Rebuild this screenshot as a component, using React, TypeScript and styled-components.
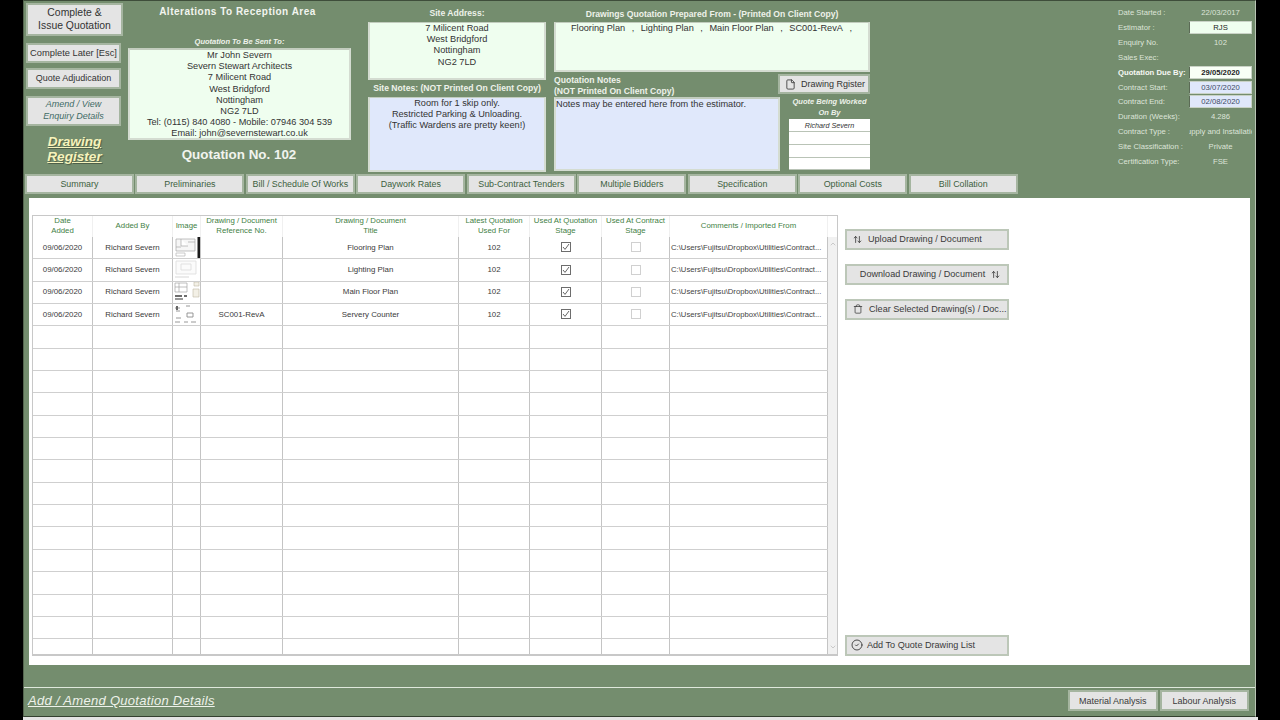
import React from 'react';
import styled, { createGlobalStyle } from 'styled-components';
import { ArrowUpDown, CircleCheck, File, Trash, ChevronUp, ChevronDown } from 'lucide-react';

const GREEN = '#748d6e';
const FACE = '#e4e4e4';
const EDGE = '#a5b5a0';
const MINT = '#effeef';
const BLUE = '#e0e8fb';

const GlobalStyle = createGlobalStyle`
  html, body {
    margin: 0;
    padding: 0;
    background: #000;
    overflow: hidden;
  }
  body {
    font-family: 'Liberation Sans', Arial, sans-serif;
  }
`;

const Page = styled.div`
  width: 1280px;
  height: 720px;
  display: flex;
  flex-direction: column;
  align-items: center;
  background: #000;
`;

const Screen = styled.div`
  width: 1233px;
  margin-left: -1px;
  height: 717px;
  flex: none;
  background: ${GREEN};
  border-top: 1px solid #3e4d3a;
  border-left: 1px solid #55654f;
  border-right: 1px solid #b8c4b4;
  border-bottom: 1px solid #33402f;
  box-sizing: border-box;
  display: flex;
  flex-direction: column;
`;

const BottomStrip = styled.div`
  width: 1235px;
  flex: 1;
  background: #e4e4e4;
`;

const Header = styled.div`
  height: 172px;
  flex: none;
  display: flex;
  padding: 2px 3px 0 2px;
  box-sizing: border-box;
`;

const ActionColumn = styled.div`
  width: 97px;
  flex: none;
  display: flex;
  flex-direction: column;
  align-items: flex-start;
`;

const ActionButton = styled.button<{ $w: number; $h: number; $top?: number; $size?: number; $note?: boolean }>`
  width: ${({ $w }) => $w}px;
  height: ${({ $h }) => $h}px;
  flex: none;
  margin: ${({ $top }) => $top || 0}px 0 0;
  padding: 0;
  background: ${FACE};
  border: 2px solid ${EDGE};
  color: ${({ $note }) => ($note ? '#3f6b66' : '#333')};
  font-family: inherit;
  font-size: ${({ $size }) => $size || 9.3}px;
  font-style: ${({ $note }) => ($note ? 'italic' : 'normal')};
  line-height: ${({ $note }) => ($note ? 1.3 : 1.17)};
  text-align: center;
  white-space: pre-line;
`;

const RegisterLink = styled.a`
  width: 100%;
  margin-top: 8px;
  color: #f6f3bb;
  font-size: 13.6px;
  line-height: 15px;
  font-weight: bold;
  font-style: italic;
  text-decoration: underline;
  text-align: center;
  white-space: pre-line;
  text-shadow: 1px 1px 1px #4d5f49;
`;

const RecipientColumn = styled.div`
  width: 223px;
  margin-left: 5px;
  flex: none;
  display: flex;
  flex-direction: column;
  align-items: center;
`;

const JobTitle = styled.div`
  width: 100%;
  margin-top: 3px;
  height: 12px;
  padding-right: 4px;
  box-sizing: border-box;
  text-align: center;
  color: #f2f5ef;
  font-size: 10px;
  line-height: 12px;
  font-weight: bold;
  letter-spacing: 0.5px;
`;

const MiniHeading = styled.div<{ $top?: number; $bottom?: number; $box?: boolean }>`
  margin: ${({ $top }) => $top || 0}px 0 ${({ $bottom }) => $bottom || 0}px;
  width: ${({ $box }) => ($box ? '81px' : 'auto')};
  color: #eef2ea;
  font-size: 7.5px;
  line-height: ${({ $box }) => ($box ? '10.5px' : '9px')};
  font-weight: bold;
  font-style: italic;
  text-align: center;
  white-space: pre-line;
`;

const TextBox = styled.div<{ $tone: 'mint' | 'blue' | 'white'; $h: number; $left?: boolean; $top?: number; $thin?: boolean }>`
  width: 100%;
  height: ${({ $h }) => $h}px;
  margin-top: ${({ $top }) => $top || 0}px;
  flex: none;
  box-sizing: border-box;
  border: 2px solid #d4dcd1;
  border-top: ${({ $thin }) => ($thin ? 1 : 2)}px solid #c2ccbe;
  background: ${({ $tone }) => ($tone === 'mint' ? MINT : $tone === 'blue' ? BLUE : '#fff')};
  color: #333;
  font-size: 9.2px;
  line-height: 11.2px;
  text-align: ${({ $left }) => ($left ? 'left' : 'center')};
  white-space: pre-line;
  overflow: hidden;
`;

const QuoteNumber = styled.div`
  margin-top: 7px;
  padding-right: 1px;
  color: #f1f4ee;
  font-size: 13.4px;
  line-height: 15px;
  font-weight: bold;
`;

const SiteColumn = styled.div`
  width: 178px;
  margin-left: 17px;
  flex: none;
  display: flex;
  flex-direction: column;
`;

const SectionLabel = styled.div<{ $top?: number; $bottom?: number; $center?: boolean }>`
  margin: ${({ $top }) => $top || 0}px 0 ${({ $bottom }) => $bottom || 0}px;
  color: #eef2ea;
  font-size: 8.6px;
  line-height: 11px;
  font-weight: bold;
  text-align: ${({ $center }) => ($center ? 'center' : 'left')};
  white-space: pre-line;
`;

const DrawingsColumn = styled.div`
  width: 316px;
  margin-left: 8px;
  flex: none;
  display: flex;
  flex-direction: column;
`;

const DrawingsList = styled.div`
  display: flex;
  padding-left: 15px;
  gap: 6.5px;
`;

const NotesRow = styled.div`
  display: flex;
  margin-top: 3px;
`;

const NotesLeft = styled.div`
  width: 226px;
  flex: none;
  display: flex;
  flex-direction: column;
`;

const NotesRight = styled.div`
  flex: 1;
  min-width: 0;
  display: flex;
  flex-direction: column;
  align-items: flex-end;
`;

const RegisterButton = styled.button`
  width: 92px;
  height: 20px;
  flex: none;
  margin: -1px 0 0;
  padding: 0 0 0 5px;
  display: flex;
  align-items: center;
  gap: 5px;
  box-sizing: border-box;
  background: ${FACE};
  border: 2px solid ${EDGE};
  color: #333;
  font-family: inherit;
  font-size: 9px;
  white-space: nowrap;
`;

const WorkerBox = styled.div`
  width: 81px;
  margin-top: 1px;
  background: #fff;
`;

const WorkerCell = styled.div`
  height: 12.85px;
  border-bottom: 1px solid #b9c3b6;
  box-sizing: border-box;
  color: #333;
  font-size: 7.2px;
  font-style: italic;
  line-height: 13px;
  text-align: center;
`;

const Details = styled.div`
  width: 134px;
  margin-left: auto;
  padding-top: 2.5px;
  display: flex;
  flex-direction: column;
`;

const DetailRow = styled.div`
  height: 14.85px;
  display: flex;
  align-items: center;
  font-size: 7.7px;
`;

const DetailLabel = styled.div<{ $strong?: boolean }>`
  width: 71px;
  flex: none;
  color: ${({ $strong }) => ($strong ? '#f6f8f3' : '#dde4d9')};
  font-weight: ${({ $strong }) => ($strong ? 'bold' : 'normal')};
  white-space: nowrap;
`;

const DetailValue = styled.div<{ $field?: 'mint' | 'blue' | 'white' }>`
  width: 63px;
  height: 13px;
  flex: none;
  box-sizing: border-box;
  overflow: hidden;
  white-space: nowrap;
  display: flex;
  justify-content: center;
  align-items: center;
  line-height: 11px;
  color: ${({ $field }) => ($field ? ($field === 'blue' ? '#3c4a66' : '#222') : '#dde4d9')};
  font-weight: ${({ $field }) => ($field === 'white' ? 'bold' : 'normal')};
  background: ${({ $field }) =>
    $field === 'mint' ? MINT : $field === 'blue' ? BLUE : $field === 'white' ? '#f8fff6' : 'transparent'};
  border: ${({ $field }) => ($field ? `1px solid #c9d2c6` : 'none')};
  border-left-color: #5b6b56;
`;

const Tabs = styled.div`
  display: grid;
  grid-template-columns: repeat(9, 108.8px);
  column-gap: 1.7px;
  height: 20px;
  flex: none;
  padding-left: 1px;
  margin-top: 1px;
`;

const Tab = styled.button`
  margin: 0;
  padding: 0;
  background: ${FACE};
  border: 2px solid ${EDGE};
  color: #3c5f40;
  font-family: inherit;
  font-size: 8.9px;
  white-space: nowrap;
`;

const Panel = styled.div`
  height: 467px;
  flex: none;
  margin: 4px 5px 0 5px;
  padding: 17px 0 9px 3px;
  box-sizing: border-box;
  background: #fff;
  display: flex;
`;

const TableFrame = styled.div`
  width: 806px;
  height: 441px;
  flex: none;
  display: flex;
  box-sizing: border-box;
  border: 1px solid #c8c8c8;
  border-bottom-width: 2px;
`;

const TableBody = styled.div`
  width: 795px;
  flex: none;
  overflow: hidden;
`;

const COLUMNS = '60px 80px 28px 82px 176px 71px 72px 68px 158px';

const HeadRow = styled.div`
  height: 21px;
  display: grid;
  grid-template-columns: ${COLUMNS};
`;

const HeadCell = styled.div`
  display: flex;
  align-items: center;
  justify-content: center;
  padding-bottom: 1px;
  box-sizing: border-box;
  border-right: 1px solid #f0f0f0;
  color: #3f7f45;
  font-size: 7.8px;
  line-height: 9.6px;
  text-align: center;
  white-space: pre-line;
`;

const BodyRow = styled.div`
  height: 22.35px;
  box-sizing: border-box;
  display: grid;
  grid-template-columns: ${COLUMNS};
  border-bottom: 1px solid #cfcfcf;
`;

const BodyCell = styled.div<{ $start?: boolean }>`
  display: flex;
  align-items: center;
  justify-content: ${({ $start }) => ($start ? 'flex-start' : 'center')};
  padding: 0 0 1px ${({ $start }) => ($start ? '1px' : '0')};
  box-sizing: border-box;
  overflow: hidden;
  border-right: 1px solid #c4c4c4;
  color: #3a3a3a;
  font-size: 7.9px;
  white-space: nowrap;
`;

const PathText = styled.span`
  font-size: 7.7px;
  color: #444;
`;

const Tick = styled.span<{ $on: boolean }>`
  width: 10px;
  height: 10px;
  box-sizing: border-box;
  display: flex;
  align-items: center;
  justify-content: center;
  border: 1px solid ${({ $on }) => ($on ? '#6d6d6d' : '#d0d0d0')};
`;

const ThumbImage = styled.svg`
  display: block;
  width: 27px;
  height: 21px;
`;

const ScrollBar = styled.div`
  width: 9px;
  flex: none;
  margin-top: 21px;
  background: #f1f1f1;
  display: flex;
  flex-direction: column;
  justify-content: space-between;
  align-items: center;
  color: #b5b5b5;
  padding: 3px 0;
`;

const SideColumn = styled.div`
  width: 164px;
  margin-left: 7px;
  padding-top: 14px;
  flex: none;
  display: flex;
  flex-direction: column;
  gap: 14px;
`;

const SideButton = styled.button<{ $last?: boolean; $center?: boolean }>`
  width: 164px;
  height: 21px;
  flex: none;
  margin: ${({ $last }) => ($last ? 'auto 0 0' : '0')};
  padding: 0 0 1px 6px;
  box-sizing: border-box;
  display: flex;
  align-items: center;
  justify-content: ${({ $center }) => ($center ? 'center' : 'flex-start')};
  gap: 6px;
  background: ${FACE};
  border: 2px solid #bcc7b8;
  color: #3a3a3a;
  font-family: inherit;
  font-size: 9.1px;
  white-space: nowrap;
`;

const AddIcon = styled(CircleCheck)`
  margin: 0 -2px 0 -2px;
`;

const Footer = styled.div`
  margin-top: 22px;
  flex: 1;
  border-top: 1px solid #dfe8dc;
  display: flex;
  align-items: center;
  justify-content: space-between;
  padding: 0 6px 3px 4px;
`;

const FooterLink = styled.a`
  color: #eef2ea;
  font-size: 13px;
  font-style: italic;
  text-decoration: underline;
  letter-spacing: 0.3px;
`;

const FooterButtons = styled.div`
  display: flex;
  gap: 2px;
`;

const FooterButton = styled.button`
  width: 89.5px;
  height: 21px;
  margin: 0;
  padding: 0;
  background: ${FACE};
  border: 2px solid ${EDGE};
  color: #3a3a3a;
  font-family: inherit;
  font-size: 9px;
`;

const details: { label: string; value?: string; field?: 'mint' | 'blue' | 'white'; strong?: boolean }[] = [
  { label: 'Date Started :', value: '22/03/2017' },
  { label: 'Estimator :', value: 'RJS', field: 'mint' },
  { label: 'Enquiry No.', value: '102' },
  { label: 'Sales Exec:' },
  { label: 'Quotation Due By:', value: '29/05/2020', field: 'white', strong: true },
  { label: 'Contract Start:', value: '03/07/2020', field: 'blue' },
  { label: 'Contract End:', value: '02/08/2020', field: 'blue' },
  { label: 'Duration (Weeks):', value: '4.286' },
  { label: 'Contract Type :', value: 'Supply and Installation' },
  { label: 'Site Classification :', value: 'Private' },
  { label: 'Certification Type:', value: 'FSE' },
];

const tabs = [
  'Summary',
  'Preliminaries',
  'Bill / Schedule Of Works',
  'Daywork Rates',
  'Sub-Contract Tenders',
  'Multiple Bidders',
  'Specification',
  'Optional Costs',
  'Bill Collation',
];

const headings = [
  'Date\nAdded',
  'Added By',
  'Image',
  'Drawing / Document\nReference No.',
  'Drawing / Document\nTitle',
  'Latest Quotation\nUsed For',
  'Used At Quotation\nStage',
  'Used At Contract\nStage',
  'Comments / Imported From',
];

const drawings = [
  { ref: '', title: 'Flooring Plan' },
  { ref: '', title: 'Lighting Plan' },
  { ref: '', title: 'Main Floor Plan' },
  { ref: 'SC001-RevA', title: 'Servery Counter' },
];

const Thumb: React.FC<{ index: number }> = ({ index }) => {
  if (index === 0) {
    return (
      <ThumbImage viewBox="0 0 27 21">
        <path d="M3 2h19v12H3zM8 2v7h7M15 5h7M3 10h5" fill="#f6f6f6" stroke="#a8a8a8" strokeWidth="0.7" />
        <path d="M3 16h9v3H3z" fill="none" stroke="#b5b5b5" strokeWidth="0.7" />
        <rect x="24.5" y="0" width="2.5" height="21" fill="#1b1b1b" />
      </ThumbImage>
    );
  }
  if (index === 1) {
    return (
      <ThumbImage viewBox="0 0 27 21">
        <path d="M3 2h20v13H3zM8 5h10v6H8z" fill="#fbfbfb" stroke="#dcdcdc" strokeWidth="0.8" />
        <path d="M2 18h14" stroke="#dedede" strokeWidth="1.2" />
      </ThumbImage>
    );
  }
  if (index === 2) {
    return (
      <ThumbImage viewBox="0 0 27 21">
        <path d="M2 2h12v9H2zM6 2v9M2 6h12" fill="none" stroke="#a5a5a5" strokeWidth="0.7" />
        <path d="M2 14h7v2H2zM11 14h3v2h-3z" fill="#6d6d6d" />
        <path d="M2 18h8" stroke="#555" strokeWidth="1.2" />
        <path d="M21 1h5v4h-5zM20 8h6v8h-6z" fill="#f3f0e6" stroke="#c0b8a5" strokeWidth="0.6" />
      </ThumbImage>
    );
  }
  return (
    <ThumbImage viewBox="0 0 27 21">
      <path d="M2 4h5M3 7h4M13 2h4M14 9h6v4h-6zM3 14h5M2 18h5M11 18h4M18 18h5" stroke="#8d8d8d" strokeWidth="0.9" fill="none" />
      <path d="M3 2h2v4H3z" fill="#666" />
    </ThumbImage>
  );
};

export default function App() {
  return (
    <Page>
      <GlobalStyle />
      <Screen>
        <Header>
          <ActionColumn>
            <ActionButton $w={97} $h={33} $size={10.4}>{'Complete &\nIssue Quotation'}</ActionButton>
            <ActionButton $w={95} $h={20} $top={7}>Complete Later [Esc]</ActionButton>
            <ActionButton $w={95} $h={21} $top={5} $size={9}>Quote Adjudication</ActionButton>
            <ActionButton $w={95} $h={30} $top={7} $size={9} $note>{'Amend / View\nEnquiry Details'}</ActionButton>
            <RegisterLink>{'Drawing\nRegister'}</RegisterLink>
          </ActionColumn>

          <RecipientColumn>
            <JobTitle>Alterations To Reception Area</JobTitle>
            <MiniHeading $top={19} $bottom={2}>Quotation To Be Sent To:</MiniHeading>
            <TextBox $tone="mint" $h={92}>
              {'Mr John Severn\nSevern Stewart Architects\n7 Milicent Road\nWest Bridgford\nNottingham\nNG2 7LD\nTel: (0115) 840 4080 - Mobile: 07946 304 539\nEmail: john@severnstewart.co.uk'}
            </TextBox>
            <QuoteNumber>Quotation No. 102</QuoteNumber>
          </RecipientColumn>

          <SiteColumn>
            <SectionLabel $top={5} $bottom={3} $center>Site Address:</SectionLabel>
            <TextBox $tone="mint" $h={58} $thin>{'7 Milicent Road\nWest Bridgford\nNottingham\nNG2 7LD'}</TextBox>
            <SectionLabel $top={3} $center>Site Notes: (NOT Printed On Client Copy)</SectionLabel>
            <TextBox $tone="blue" $h={75} $top={3} $thin>
              {'Room for 1 skip only.\nRestricted Parking & Unloading.\n(Traffic Wardens are pretty keen!)'}
            </TextBox>
          </SiteColumn>

          <DrawingsColumn>
            <SectionLabel $top={6} $bottom={2} $center>Drawings Quotation Prepared From - (Printed On Client Copy)</SectionLabel>
            <TextBox $tone="mint" $h={50} $thin>
              <DrawingsList>
                <span>Flooring Plan</span>
                <span>,</span>
                <span>Lighting Plan</span>
                <span>,</span>
                <span>Main Floor Plan</span>
                <span>,</span>
                <span>SC001-RevA</span>
                <span>,</span>
              </DrawingsList>
            </TextBox>
            <NotesRow>
              <NotesLeft>
                <SectionLabel>{'Quotation Notes\n(NOT Printed On Client Copy)'}</SectionLabel>
                <TextBox $tone="blue" $h={74} $left>Notes may be entered here from the estimator.</TextBox>
              </NotesLeft>
              <NotesRight>
                <RegisterButton>
                  <File size={11} strokeWidth={1.8} />
                  Drawing Rgister
                </RegisterButton>
                <MiniHeading $top={3} $box>{'Quote Being Worked\nOn By'}</MiniHeading>
                <WorkerBox>
                  <WorkerCell>Richard Severn</WorkerCell>
                  <WorkerCell />
                  <WorkerCell />
                  <WorkerCell />
                </WorkerBox>
              </NotesRight>
            </NotesRow>
          </DrawingsColumn>

          <Details>
            {details.map((d) => (
              <DetailRow key={d.label}>
                <DetailLabel $strong={d.strong}>{d.label}</DetailLabel>
                {d.value && <DetailValue $field={d.field}>{d.value}</DetailValue>}
              </DetailRow>
            ))}
          </Details>
        </Header>

        <Tabs>
          {tabs.map((t) => (
            <Tab key={t}>{t}</Tab>
          ))}
        </Tabs>

        <Panel>
          <TableFrame>
            <TableBody>
              <HeadRow>
                {headings.map((h) => (
                  <HeadCell key={h}>{h}</HeadCell>
                ))}
              </HeadRow>
              {Array.from({ length: 19 }, (_, i) => {
                const d = drawings[i];
                return (
                  <BodyRow key={i}>
                    <BodyCell>{d && '09/06/2020'}</BodyCell>
                    <BodyCell>{d && 'Richard Severn'}</BodyCell>
                    <BodyCell>{d && <Thumb index={i} />}</BodyCell>
                    <BodyCell>{d && d.ref}</BodyCell>
                    <BodyCell>{d && d.title}</BodyCell>
                    <BodyCell>{d && '102'}</BodyCell>
                    <BodyCell>
                      {d && (
                        <Tick $on>
                          <svg width="8" height="8" viewBox="0 0 8 8">
                            <path d="M1 4l2 2.4L7 1" fill="none" stroke="#555" strokeWidth="0.9" />
                          </svg>
                        </Tick>
                      )}
                    </BodyCell>
                    <BodyCell>{d && <Tick $on={false} />}</BodyCell>
                    <BodyCell $start>{d && <PathText>C:\Users\Fujitsu\Dropbox\Utilities\Contract...</PathText>}</BodyCell>
                  </BodyRow>
                );
              })}
            </TableBody>
            <ScrollBar>
              <ChevronUp size={8} />
              <ChevronDown size={8} />
            </ScrollBar>
          </TableFrame>

          <SideColumn>
            <SideButton>
              <ArrowUpDown size={9} strokeWidth={2.2} />
              Upload Drawing / Document
            </SideButton>
            <SideButton $center>
              Download Drawing / Document
              <ArrowUpDown size={9} strokeWidth={2.2} />
            </SideButton>
            <SideButton>
              <Trash size={10} strokeWidth={1.8} />
              Clear Selected Drawing(s) / Doc...
            </SideButton>
            <SideButton $last>
              <AddIcon size={12} strokeWidth={1.8} />
              Add To Quote Drawing List
            </SideButton>
          </SideColumn>
        </Panel>

        <Footer>
          <FooterLink>Add / Amend Quotation Details</FooterLink>
          <FooterButtons>
            <FooterButton>Material Analysis</FooterButton>
            <FooterButton>Labour Analysis</FooterButton>
          </FooterButtons>
        </Footer>
      </Screen>
      <BottomStrip />
    </Page>
  );
}
